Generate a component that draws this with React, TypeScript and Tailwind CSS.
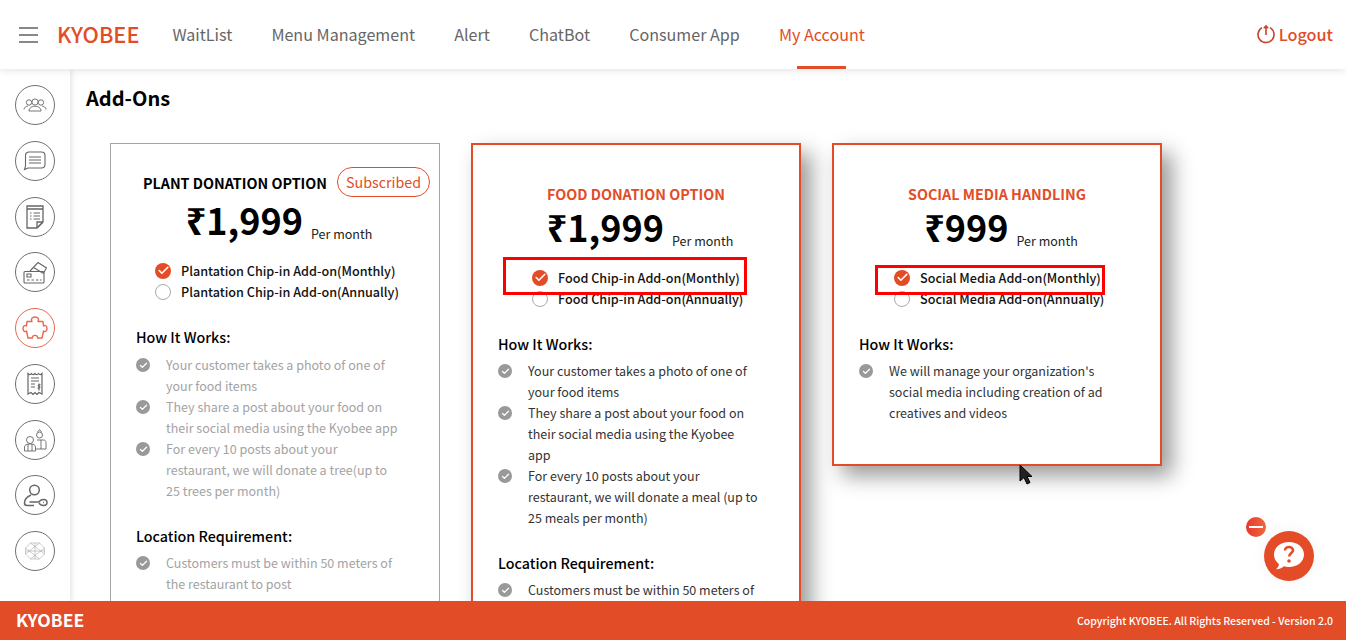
import { Check } from 'lucide-react'

const navItems = ['WaitList', 'Menu Management', 'Alert', 'ChatBot', 'Consumer App', 'My Account']

const SideIcon = ({ children, active }: { children: React.ReactNode; active?: boolean }) => (
  <div
    className={`w-10 h-10 rounded-full border flex items-center justify-center bg-white ${
      active ? 'border-[#e8694c] text-[#e8694c]' : 'border-[#707070] text-[#666]'
    }`}
  >
    <svg width="26" height="26" viewBox="0 0 26 26" fill="none" stroke="currentColor" strokeWidth="1">
      {children}
    </svg>
  </div>
)

const sideIcons = [
  <g key="team" strokeWidth="0.9">
    <circle cx="7" cy="10.500" r="2.700" />
    <circle cx="13" cy="10" r="3.100" />
    <circle cx="19" cy="10.500" r="2.700" />
    <path d="M2 17.500c0-2.200 2-3 4-3.500M24 17.500c0-2.200-2-3-4-3.500M7 19c0-3 3-4.800 6-4.800s6 1.800 6 4.800z" />
  </g>,
  <g key="chat" strokeWidth="1.100">
    <path d="M6.500 4h13a3.500 3.500 0 0 1 3.500 3.500v9a3.500 3.500 0 0 1-3.500 3.500H6l-3.500 1.500L3.500 18V7.500A3.500 3.500 0 0 1 6.500 4z" />
    <path d="M7 9h12M7 12h12M7 15h12" />
  </g>,
  <g key="list" strokeWidth="1.300">
    <path d="M5 2h16v16l-6 6H5z" />
    <path d="M5 5h16M21 18h-6v6M16 23l5-5" />
    <path d="M8 9h1.500M11.500 9h6.500M8 12h1.500M11.500 12h6.500M8 15h1.500M11.500 15h6.500" strokeWidth="1.100" />
  </g>,
  <g key="cards" strokeWidth="1.100">
    <path d="M3 12.500h18a1 1 0 0 1 1 1V23a1 1 0 0 1-1 1H3a1 1 0 0 1-1-1v-9.500a1 1 0 0 1 1-1z" />
    <path d="M8 12l8-8.500 8.500 5.500-3 5M11.500 8.500l10 6" />
    <path d="M5 15h4v3H5zM5 21h2.500M9.500 21h2.500M14 21h2.500M18 21h1.500" />
  </g>,
  <path
    key="puzzle"
    strokeWidth="1.400"
    strokeLinejoin="round"
    d="M10 6.500C8.500 4 10 2 13 2s4.500 2 3 4.500h5l.5 4.500c1.500-1.500 3.500 0 3.500 2.500s-2 4-3.500 2.500L20 23h-4.500c1-3.500-6-3.500-5 0H6l-1.500-7C3 17.500 1 16 1 13.500S3 9.500 4.500 11L5 6.500z"
  />,
  <g key="receipt" strokeWidth="1.200">
    <path d="M6 2.500c1.500 1.500 2.500 1.500 3.500 0 1 1.500 2 1.500 3.500 0 1 1.500 2.500 1.500 3.500 0 1 1.500 2 1.500 3.500 0V23l-3-1.500-2 2-2-2-2 2-2-2L6 23z" />
    <path d="M9 7h8M9 10h8M9 13h4M9 16h4" />
    <path d="M17 12.500v7M18.500 14c-2-1-3 1-1.500 1.500s1 2.500-1.500 1.500" />
  </g>,
  <g key="people" strokeWidth="0.900">
    <circle cx="8" cy="13" r="3.500" />
    <path d="M2.500 24v-4c0-2 2-3 5.500-3s5.500 1 5.500 3v4zM6 17v7M10 17v7" />
    <circle cx="17.500" cy="8" r="3" />
    <path d="M15.500 5l2-2.500 2 2.500M15 13h6.500c1.500 0 2.500 1 2.500 2.500V22h-10M19 13v9" />
  </g>,
  <g key="key" strokeWidth="1.500">
    <circle cx="12.500" cy="8" r="4.800" />
    <path d="M9 13c-3.500 1.500-6.500 4.500-6.500 8 0 1.500 1 2.500 2.500 2.500h7" />
    <path d="M7.500 20h9.500c.8-1.500 2.500-2.500 4.500-2.500 2.500 0 3.500 1.500 3.500 3s-1 3-3.500 3c-2 0-3.700-1-4.500-2.500M21 20.500h.8" />
  </g>,
  <g key="gem" strokeWidth="0.600" stroke="#aaa">
    <path d="M8.500 5h9l5 5v6l-5 5h-9l-5-5v-6z" />
    <path d="M8.500 5l14 11M17.500 5l-14 11M3.500 10l14 11M22.500 10l-14 11M13 5v16M3.500 13h19" />
  </g>,
]

const Radio = ({ checked }: { checked?: boolean }) =>
  checked ? (
    <span className="w-4 h-4 rounded-full bg-[#e34c26] flex items-center justify-center shrink-0">
      <Check size={13} strokeWidth={3} className="text-white" />
    </span>
  ) : (
    <span className="w-4 h-4 rounded-full border border-[#aaa] bg-white shrink-0" />
  )

const Bullet = () => (
  <span className="w-[14px] h-[14px] rounded-full bg-[#999] flex items-center justify-center shrink-0 mt-[4px]">
    <Check size={9} strokeWidth={3.5} className="text-white" />
  </span>
)

const Bullets = ({ items, muted, textWidth }: { items: string[]; muted?: boolean; textWidth: string }) => (
  <ul className={`text-[12.5px] leading-[21px] ${muted ? 'text-[#a3a3a3]' : 'text-[#333]'}`}>
    {items.map((t) => (
      <li key={t} className="flex gap-[16px]">
        <Bullet />
        <span className={textWidth}>{t}</span>
      </li>
    ))}
  </ul>
)

type CardProps = {
  title: string
  price: string
  options: string[]
  how: string[]
  location?: string[]
  plain?: boolean
  optionIndent: string
  textWidth: string
  className?: string
}

const Card = ({ title, price, options, how, location, plain, optionIndent, textWidth, className }: CardProps) => (
  <div
    className={`w-[330px] shrink-0 bg-white px-[25px] ${
      plain
        ? 'border border-[#a5a5a5] pt-[23px] h-[500px]'
        : 'border-2 border-[#e34c26] shadow-[10px_10px_20px_rgba(0,0,0,0.4)] pt-[34px]'
    } ${className ?? ''}`}
  >
    {plain ? (
      <div className="flex items-center h-[30px] pl-[7px] whitespace-nowrap">
        <h3 className="text-[14.3px] font-bold text-black uppercase mr-[10px] mt-[2px] shrink-0">{title}</h3>
        <span className="h-[30px] px-[8px] rounded-full border border-[#e34c26] text-[#e34c26] text-[14.3px] leading-[28px] shrink-0">
          Subscribed
        </span>
      </div>
    ) : (
      <h3 className="text-[14.3px] font-bold text-[#e34c26] uppercase text-center leading-[30px]">{title}</h3>
    )}
    <div className={`flex items-end justify-center pl-[8px] ${plain ? 'mt-[-1px]' : 'mt-[-6px]'} h-[46px]`}>
      <span className="text-[36px] font-bold text-black leading-[46px]">{price}</span>
      <span className="text-[12.5px] text-[#222] ml-[8px] leading-[20px] mb-[-2px]">Per month</span>
    </div>
    <div className="text-[12.6px] font-medium text-[#111] leading-[21px] mt-[18px]">
      {options.map((o, i) => (
        <label key={o} className={`flex items-center gap-[10px] ${optionIndent}`}>
          <Radio checked={i === 0} />
          {o}
        </label>
      ))}
    </div>
    <h4 className="text-[14.3px] font-medium text-black mt-[23px] leading-[24px]">How It Works:</h4>
    <div className={plain ? 'mt-[5px]' : 'mt-[4px]'}>
      <Bullets items={how} muted={plain} textWidth={textWidth} />
    </div>
    {location && (
      <>
        <h4 className="text-[14.3px] font-medium text-black mt-[23px] leading-[24px]">Location Requirement:</h4>
        <div className="mt-[4px]">
          <Bullets items={location} muted={plain} textWidth={textWidth} />
        </div>
      </>
    )}
  </div>
)

export default function App() {
  return (
    <div
      className="relative w-[1346px] h-[640px] overflow-hidden bg-white flex flex-col"
      style={{ fontFamily: '"Noto Sans CJK KR", "Noto Sans", sans-serif' }}
    >
      <header className="relative z-20 h-[69px] shrink-0 bg-white shadow-[0_1px_8px_rgba(0,0,0,0.12)] flex items-center pl-[19px] pr-[13px]">
        <div className="flex flex-col gap-[5px] w-[19px]">
          <span className="h-[2px] bg-[#888]" />
          <span className="h-[2px] bg-[#888]" />
          <span className="h-[2px] bg-[#888]" />
        </div>
        <div className="ml-[19px] text-[21.7px] font-medium text-[#e34c26]">KYOBEE</div>
        <nav className="flex ml-[33px] gap-[39.2px] h-full">
          {navItems.map((n) => (
            <a
              key={n}
              className={`relative flex items-center text-[16.1px] ${
                n === 'My Account' ? 'text-[#e34c26]' : 'text-[#666]'
              }`}
            >
              {n}
              {n === 'My Account' && (
                <span className="absolute left-[18px] bottom-0 w-[49px] h-[3px] bg-[#e34c26]" />
              )}
            </a>
          ))}
        </nav>
        <a className="ml-auto flex items-center gap-[3px] text-[16.2px] font-medium text-[#e34c26]">
          <svg width="20" height="20" viewBox="0 0 20 20" fill="none" stroke="#c8432a" strokeWidth="1.600">
            <path d="M6 3.600a8 8 0 1 0 8 0" />
            <path d="M10 11V2M7.800 4.200L10 2l2.200 2.200" />
          </svg>
          Logout
        </a>
      </header>

      <div className="flex flex-1 min-h-0">
        <aside className="w-[70px] shrink-0 bg-white shadow-[2px_0_5px_rgba(0,0,0,0.1)] flex flex-col items-center pt-[16px] gap-[15.75px] z-10">
          {sideIcons.map((icon, i) => (
            <SideIcon key={i} active={i === 4}>
              {icon}
            </SideIcon>
          ))}
        </aside>
        <main className="flex-1 min-w-0 pl-[16px] overflow-hidden">
          <h2 className="text-[20px] font-bold text-black mt-[14px] leading-[30px]">Add-Ons</h2>
          <div className="flex items-start gap-[31px] mt-[30px] ml-[24px]">
            <Card
              plain
              title="Plant Donation Option"
              price="₹1,999"
              optionIndent="pl-[19px]"
              textWidth="w-[235px]"
              options={['Plantation Chip-in Add-on(Monthly)', 'Plantation Chip-in Add-on(Annually)']}
              how={[
                'Your customer takes a photo of one of your food items',
                'They share a post about your food on their social media using the Kyobee app',
                'For every 10 posts about your restaurant, we will donate a tree(up to 25 trees per month)',
              ]}
              location={['Customers must be within 50 meters of the restaurant to post']}
            />
            <Card
              title="Food Donation Option"
              price="₹1,999"
              optionIndent="pl-[34px]"
              textWidth="w-[231px]"
              options={['Food Chip-in Add-on(Monthly)', 'Food Chip-in Add-on(Annually)']}
              how={[
                'Your customer takes a photo of one of your food items',
                'They share a post about your food on their social media using the Kyobee app',
                'For every 10 posts about your restaurant, we will donate a meal (up to 25 meals per month)',
              ]}
              location={['Customers must be within 50 meters of the restaurant to post']}
              className="h-[600px]"
            />
            <Card
              title="Social Media Handling"
              price="₹999"
              optionIndent="pl-[35px]"
              textWidth="w-[235px]"
              options={['Social Media Add-on(Monthly)', 'Social Media Add-on(Annually)']}
              how={["We will manage your organization's social media including creation of ad creatives and videos"]}
              className="h-[323px]"
            />
          </div>
        </main>
      </div>

      <footer className="relative z-20 h-[39px] shrink-0 bg-[#e24c27] flex items-center justify-between pl-[16px] pr-[13px] text-white">
        <span className="text-[17.5px] font-bold">KYOBEE</span>
        <span className="text-[10.5px] font-medium">Copyright KYOBEE. All Rights Reserved - Version 2.0</span>
      </footer>

      {/* annotation boxes drawn over the screenshot */}
      <div className="absolute left-[503px] top-[257px] w-[244px] h-[38px] border-[3px] border-[#fe0000] z-30" />
      <div className="absolute left-[875px] top-[265px] w-[230px] h-[30px] border-[3px] border-[#fe0000] z-30" />

      {/* mouse pointer */}
      <svg className="absolute left-[1019px] top-[464px] z-30" width="14" height="22" viewBox="0 0 14 22">
        <path d="M1 1v16l4-3.500 3 6.500 3-1.500-3-6h5z" fill="#222" stroke="#000" strokeWidth="1" />
      </svg>

      {/* help widget */}
      <div className="absolute left-[1246px] top-[517px] w-5 h-5 rounded-full bg-gradient-to-r from-[#e5342f] to-[#f0683c] flex items-center justify-center z-30">
        <span className="w-[14px] h-[2px] bg-white" />
      </div>
      <div className="absolute left-[1264px] top-[531px] w-[50px] h-[50px] rounded-full bg-[#e34c26] shadow-[0_0_16px_rgba(0,0,0,0.05)] flex items-center justify-center z-30">
        <svg width="32" height="30" viewBox="0 0 32 30">
          <path d="M16 1c8.500 0 15 5.300 15 12.500S24.500 26 16 26c-2 0-3.500-.2-5-.7-1.500 1.500-4.500 3-8 2.900 1.500-1.200 2.700-3 3-5C3 21 1 17.500 1 13.500 1 6.300 7.500 1 16 1z" fill="#fff" />
          <circle cx="16" cy="20" r="1.800" fill="#e34c26" />
          <path d="M12 9.500c0-2.300 1.800-3.500 4-3.500s4 1.300 4 3.300c0 2.700-3.800 2.700-3.800 6.200" fill="none" stroke="#e34c26" strokeWidth="2.600" />
        </svg>
      </div>
    </div>
  )
}
